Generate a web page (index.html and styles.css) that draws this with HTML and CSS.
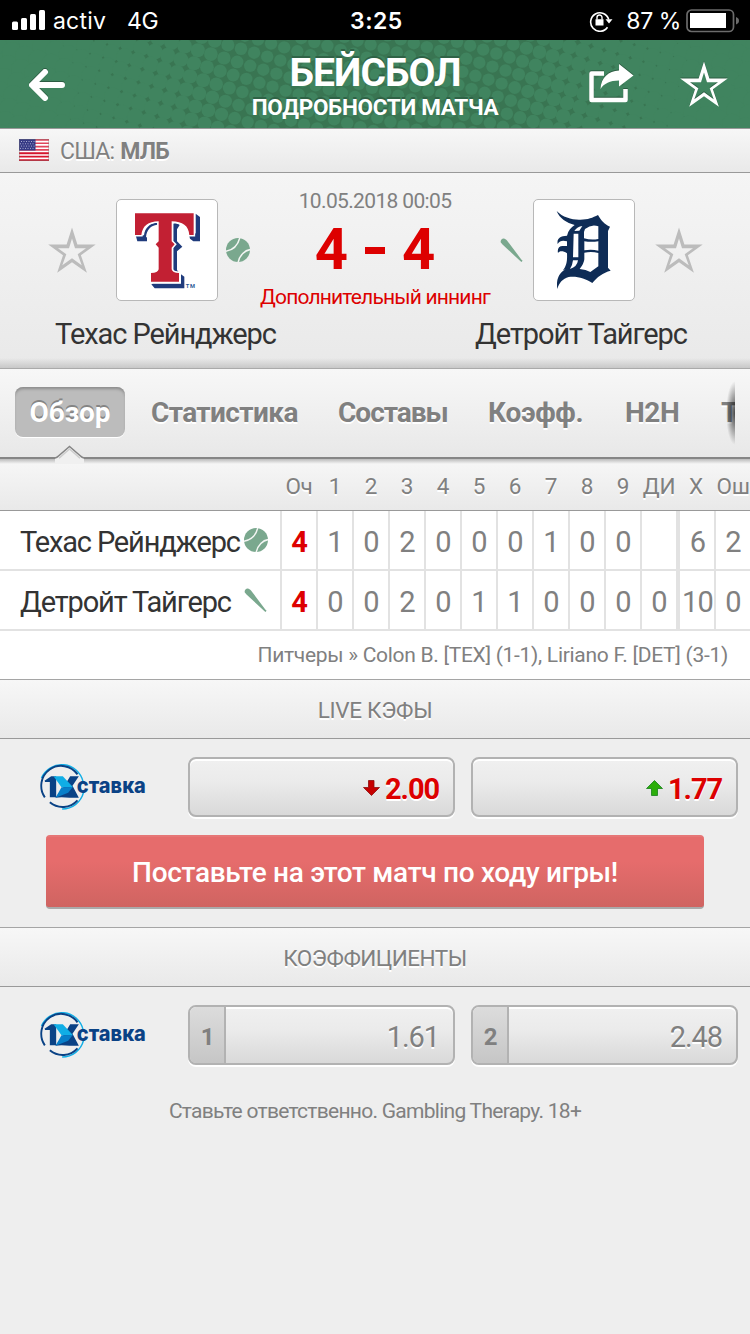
FILE: index.html
```html
<!DOCTYPE html>
<html lang="ru">
<head>
<meta charset="utf-8">
<title>Бейсбол</title>
<link rel="stylesheet" href="styles.css">
</head>
<body>
<svg class="defs" aria-hidden="true">
  <symbol id="star" viewBox="0 0 48 48"><path fill="currentColor" fill-rule="evenodd" d="M24 1.500 29.400 18.400 47.700 18.500 32.900 29.200 38.900 46.700 24 36.300 9.200 46.700 15 29.200 .2 18.500 18.600 18.400ZM24 12.500 21 22.200 10 22.300 18.300 28.300 14.300 39.200 24 32.200 33.700 39.200 29.700 28.300 38 22.300 27 22.200Z"/></symbol>
  <symbol id="ball" viewBox="0 0 24 24"><circle cx="12" cy="12" r="12" fill="#7aa88e"/><path d="M-1 13.500C6 12.500 12 8 14-1M12 25C13.500 17 19 12 25 11.500" fill="none" stroke="#f4f6f4" stroke-width="1.500"/></symbol>
  <symbol id="bat" viewBox="0 0 24 24"><path fill="#7aa88e" d="M.8 4.500C.2 2.500 1.500.4 3.600.4 5 .3 6 1.400 7 2.500L21.300 21.400 22.600 22.700 21.400 24 20 22.800 2.500 6.500Z"/></symbol>
  <symbol id="mark" viewBox="120 66 320 150">
    <path d="M124 114A66 66 0 0 1 249 126M250 157A66 66 0 0 1 186 207" fill="none" stroke="#10aee6" stroke-width="4.500"/>
    <path d="M134 172A59 59 0 0 1 232 103M149 187A60 60 0 0 0 232 181" fill="none" stroke="#0a4285" stroke-width="6"/>
    <path fill="#0a4285" d="M133 122 153 109H168V172H149V126H135ZM210 109H236L217 137 236 173H208L184 172 166 173 191 140Z"/>
    <path fill="#10aee6" d="M160 109H188L218 141 184 142Z"/>
    <path fill="#087fc9" d="M184 142 218 141 204 158 166 173Z"/>
  </symbol>
</svg>

<div class="status">
  <svg class="signal" viewBox="0 0 34 20"><g fill="#fff"><rect y="11.500" width="6" height="8.500" rx="1.500"/><rect x="9" y="8" width="6" height="12" rx="1.500"/><rect x="18" y="4" width="6" height="16" rx="1.500"/><rect x="27" width="6" height="20" rx="1.500"/></g></svg>
  <span class="carrier">activ</span><span class="net">4G</span>
  <span class="clock">3:25</span>
  <svg class="lock" viewBox="0 0 24 22"><path d="M18.500 17.200A9.200 9.200 0 1 1 19.700 9.500" fill="none" stroke="#fff" stroke-width="1.600"/><path fill="#fff" d="M16.500 9.300H23.500L20 13.500ZM6.500 9.300H14.500V15.500H6.500Z"/><path d="M8 9.500V7.500a2.500 2.500 0 0 1 5 0V9.500" fill="none" stroke="#fff" stroke-width="1.400"/></svg>
  <span class="pct">87 %</span>
  <svg class="battery" viewBox="0 0 54 24"><rect x="1" y="1" width="46.500" height="21.500" rx="4.500" fill="none" stroke="#6b6b6b" stroke-width="1.700"/><rect x="4" y="4" width="36" height="15" fill="#fff"/><path d="M50 8v7.500q3-1 3-3.700T50 8Z" fill="#6b6b6b"/></svg>
</div>

<header class="top">
  <svg class="dots" id="dots" width="750" height="88"></svg>
  <svg class="back" viewBox="0 0 38 34"><path d="M17 4 4 17 17 30M6 17H34" fill="none" stroke="#fff" stroke-width="6" stroke-linecap="round" stroke-linejoin="round"/></svg>
  <h1 class="titles"><span class="title">БЕЙСБОЛ</span><span class="subtitle">ПОДРОБНОСТИ МАТЧА</span></h1>
  <svg class="share" viewBox="0 0 46 40"><path d="M16 9.500H3.500V36H37.500V25" fill="none" stroke="#fff" stroke-width="4.500" stroke-linejoin="round"/><path fill="#fff" d="M31 0 45.500 11.500 31 22.500V16.500C22 16.500 16 19.500 12.500 25 13 13.500 20.500 7 31 6.500Z"/></svg>
  <svg class="fav"><use href="#star"/></svg>
</header>

<div class="league">
  <svg class="flag" viewBox="0 0 30 22"><rect width="30" height="22" fill="#fff"/><g fill="#e0455c"><path d="M0 0H30V1.700H0ZM0 3.400H30V5.100H0ZM0 6.800H30V8.500H0ZM0 10.100H30V11.800H0Z"/></g><path fill="#d5152c" d="M0 13.300H30V15.200H0ZM0 16.700H30V18.500H0ZM0 20.200H30V22H0Z"/><rect width="16.500" height="11.500" fill="#363a85"/><path d="M2 2.500H15.500M1 4.800H15.500M2 7.100H15.500M1 9.400H15.500" stroke="#a9abd0" stroke-width="1" stroke-dasharray="1 1.500"/><rect x=".5" y=".5" width="29" height="21" fill="none" stroke="#777" stroke-opacity=".35"/></svg>
  <span class="country">США:</span><b class="lname">МЛБ</b>
</div>

<section class="match">
  <div class="duel">
    <svg class="star"><use href="#star"/></svg>
    <div class="logo home"><svg viewBox="351 60 300 300">
      <path fill="#1f3b7c" d="M587 101 600 111V184H580L570 176 568 168 587 160ZM405 172H438C440 148 452 137 472 134V127C450 130 434 144 432 166H407L412 184H441L441 172ZM520 131C528 130 534 132 539 135L531 148V184L547 200 531 214V270L536 277 520 272ZM543 283 553 290V325H464L454 313 459 311H543Z"/>
      <path fill="none" stroke="#fff" stroke-width="9" d="M405 100H581V165H568C566 137 548 125 515 124V184L524 193 515 203V268Q517 279 537 279V305H453V279Q474 279 476 268V203L467 193 476 184V124C444 125 428 137 424 165H405Z"/>
      <path fill="#c22033" d="M405 100H581V165H568C566 137 548 125 515 124V184L524 193 515 203V268Q517 279 537 279V305H453V279Q474 279 476 268V203L467 193 476 184V124C444 125 428 137 424 165H405Z"/>
      <text x="557" y="325" class="tm" textLength="28">TM</text></svg></div>
    <svg class="serve"><use href="#ball"/></svg>
    <div class="center">
      <span class="date">10.05.2018 00:05</span>
      <span class="score"><span>4</span><i class="dash"></i><span>4</span></span>
      <span class="phase">Дополнительный иннинг</span>
    </div>
    <svg class="serve"><use href="#bat"/></svg>
    <div class="logo away"><svg viewBox="132 60 300 300">
      <path fill="#0e2c56" fill-rule="evenodd" d="M200 93C218 112 247 120 271 119 294 119 308 113 324 105 332 120 343 133 360 140L354 153V263L362 272C339 278 321 291 307 309 288 296 259 287 236 291 218 296 207 309 202 327 198 302 205 279 227 268L219 271C230 256 232 244 231 220 218 211 208 213 204 219 201 205 208 196 222 198H231V184C218 180 209 182 203 192 200 176 210 168 231 167 235 151 243 142 254 135 230 129 208 115 200 93ZM253 153Q262 140 277 138L268 152ZM251 161H265V232H249ZM285 147Q305 131 325 139V177Q303 181 282 175V156ZM283 184Q304 187 325 184V212Q304 207 283 211ZM283 218Q305 213 325 219V259L301 276Q288 268 269 267 282 251 283 238ZM249 241H264Q262 260 240 267 247 258 249 241Z"/></svg></div>
    <svg class="star"><use href="#star"/></svg>
  </div>
  <div class="names"><div class="name-home">Техас Рейнджерс</div><div class="name-away">Детройт Тайгерс</div></div>
</section>

<nav class="tabs">
  <div class="strip">
    <a class="tab active">Обзор</a><a class="tab t2">Статистика</a><a class="tab t3">Составы</a><a class="tab t4">Коэфф.</a><a class="tab t5">H2H</a><a class="tab t6">Таблица</a>
    <i class="more"></i>
  </div>
  <svg class="notch" viewBox="0 0 30 18"><path d="M0 13.500 14.500 .8 29 13.500V18H0Z" fill="#f0f0f0"/><path d="M0 13 Q2 12.500 3.500 11L14.500 1.500 25.500 11Q27 12.500 29 13" fill="none" stroke="#858585" stroke-width="1.600"/><path d="M4 13.300 14.500 4 25 13.300" fill="none" stroke="#ccc" stroke-width="1.500"/></svg>
</nav>

<div class="grid head"><span></span><span>Оч</span><span>1</span><span>2</span><span>3</span><span>4</span><span>5</span><span>6</span><span>7</span><span>8</span><span>9</span><span>ДИ</span><span>X</span><span>Ош</span></div>
<div class="grid row"><span class="team"><span class="team-name">Техас Рейнджерс</span><svg class="mini"><use href="#ball"/></svg></span><b>4</b><span>1</span><span>0</span><span>2</span><span>0</span><span>0</span><span>0</span><span>1</span><span>0</span><span>0</span><span></span><span class="hits">6</span><span>2</span></div>
<div class="grid row"><span class="team"><span class="team-name">Детройт Тайгерс</span><svg class="mini"><use href="#bat"/></svg></span><b>4</b><span>0</span><span>0</span><span>2</span><span>0</span><span>1</span><span>1</span><span>0</span><span>0</span><span>0</span><span>0</span><span class="hits">10</span><span>0</span></div>
<div class="pitchers">Питчеры » Colon B. [TEX] (1-1), Liriano F. [DET] (3-1)</div>

<h2 class="section s1">LIVE КЭФЫ</h2>
<div class="odds">
  <svg class="brand" viewBox="0 0 320 150"><use href="#mark" width="320" height="150"/><text x="110" y="92" class="stavka-text" textLength="207" lengthAdjust="spacingAndGlyphs">ставка</text></svg>
  <div class="odd live"><svg class="arrow" viewBox="0 0 17 16"><path d="M5.500 .5H11V7.500H16.500L8.500 15.500 .5 7.500H5.500Z" fill="#c60000" stroke="#8d0d0d" stroke-width=".8"/></svg><b>2.00</b></div>
  <div class="odd live"><svg class="arrow" viewBox="0 0 17 16"><path d="M5.500 15.500H11.500V8.500H16.500L8.500 .5 .5 8.500H5.500Z" fill="#2cae0b" stroke="#16801a" stroke-width=".8"/></svg><b>1.77</b></div>
</div>
<div class="bet">Поставьте на этот матч по ходу игры!</div>
<h2 class="section s2">КОЭФФИЦИЕНТЫ</h2>
<div class="odds">
  <svg class="brand" viewBox="0 0 320 150"><use href="#mark" width="320" height="150"/><text x="110" y="92" class="stavka-text" textLength="207" lengthAdjust="spacingAndGlyphs">ставка</text></svg>
  <div class="odd"><b class="side">1</b><span class="val">1.61</span></div>
  <div class="odd"><b class="side">2</b><span class="val">2.48</span></div>
</div>
<footer class="foot">Ставьте ответственно. Gambling Therapy. 18+</footer>
<script src="dots.js"></script>
</body>
</html>
```
FILE: styles.css
```css
* { box-sizing: border-box; }
body { margin: 0; width: 750px; height: 1334px; overflow: hidden; background: #eee; color: #808080; font-family: Roboto, "Noto Sans", sans-serif; }
svg { display: block; flex: none; }
.defs { position: absolute; width: 0; height: 0; }
h1, h2 { margin: 0; font-weight: 400; }
span, b { white-space: nowrap; }

.status { height: 40px; background: #000; color: #fff; display: flex; align-items: center; font: 23px/40px Inter, sans-serif; padding: 1px 11px 0 12px; position: relative; }
.signal { width: 34px; height: 20px; margin-top: -1px; }
.carrier { margin-left: 7px; letter-spacing: .2px; }
.net { margin-left: 21px; letter-spacing: -.5px; }
.clock { position: absolute; left: 350px; font-weight: 600; letter-spacing: .5px; }
.lock { width: 24px; height: 22px; margin-left: auto; }
.pct { margin-left: 13px; letter-spacing: -.4px; }
.battery { width: 54px; height: 24px; margin-left: 5px; margin-right: -1px; }

.top { height: 88px; background: #40845f; display: flex; align-items: center; position: relative; color: #fff; padding: 0 22px 0 28px; }
.top > * { position: relative; }
.top .dots { position: absolute; left: 0; top: 0; }
.back { width: 38px; height: 34px; margin-top: 2px; filter: drop-shadow(0 -1px 0 #2c5c42); }
.titles { width: 290px; margin-left: 164px; padding-top: 4px; display: flex; flex-direction: column; align-items: center; text-shadow: 0 -2px 0 #2f6346; font-weight: 700; }
.title { font-size: 39px; line-height: 42px; height: 42px; letter-spacing: -.9px; }
.subtitle { font-size: 22.500px; line-height: 27px; height: 27px; letter-spacing: -.3px; }
.share { width: 46px; height: 40px; margin-left: 68px; filter: drop-shadow(0 -1px 0 #2c5c42); }
.fav { width: 48px; height: 48px; margin-left: auto; margin-top: -1px; filter: drop-shadow(0 -1px 0 #2c5c42); }

.league { height: 45px; border-top: 1px solid #999; border-bottom: 1px solid #999; background: linear-gradient(#f7f7f7, #e9e9e9); display: flex; align-items: center; padding-left: 19px; font-size: 23px; line-height: 27px; letter-spacing: -.8px; text-shadow: 0 2px 0 #fff; }
.flag { width: 30px; height: 22px; margin-top: -1px; }
.country { margin-left: 11px; padding-top: 2px; }
.lname { margin-left: 6px; padding-top: 2px; }

.match { height: 196px; padding-top: 16px; border-bottom: 1px solid #aaa; background: linear-gradient(transparent 185px, #c8c8c8), linear-gradient(#f5f5f5, #e9e9e9); }
.duel { height: 122px; display: flex; align-items: center; padding-left: 48px; }
.star { width: 48px; height: 48px; color: #bcbcbc; }
.logo { width: 102px; height: 102px; border: 1px solid #b8b8b8; border-radius: 5px; background: #fff; flex: none; }
.logo svg { width: 100px; height: 100px; }
.home { margin: 0 8px 0 20px; }
.away { margin: 0 20px 0 9px; }
.serve { width: 24px; height: 24px; }
.tm { font: 700 17px Roboto, sans-serif; fill: #2d5a97; }
.stavka-text { font: 800 64px Inter, sans-serif; fill: #0a4285; }
.center { width: 250px; height: 122px; display: flex; flex-direction: column; align-items: center; }
.date { font-size: 21px; line-height: 24px; height: 22px; letter-spacing: -.65px; }
.score { height: 76px; display: flex; align-items: center; color: #d00; font-weight: 700; font-size: 58px; line-height: 76px; }
.score .dash { width: 20px; height: 7px; margin: 3px 17px 0; background: #d00; }
.phase { color: #d00; font-size: 21px; line-height: 20px; letter-spacing: -.82px; }
.names { display: flex; justify-content: space-between; color: #333; font-size: 29px; line-height: 47px; letter-spacing: -1.080px; text-align: center; }
.name-home { width: 331px; }
.name-away { width: 338px; }

.tabs { height: 90px; border-bottom: 2px solid #868686; background: linear-gradient(#f7f7f7, #e8e8e8); position: relative; }
.strip { display: flex; width: 735px; height: 88px; padding-left: 15px; align-items: center; overflow: hidden; position: relative; }
.tab { font-size: 28px; font-weight: 700; line-height: 52px; flex: none; text-shadow: 0 2px 0 #fff; }
.tab.active { width: 110px; height: 50px; margin-top: -2px; border-radius: 8px; background: #bcbcbc; color: #fff; text-align: center; text-shadow: 0 -2px 0 #858585; box-shadow: inset 0 3px 3px -1px #8c8c8c, 0 1px 0 #fff; }
.t2 { margin-left: 26px; width: 187px; letter-spacing: -.6px; }
.t3 { width: 150px; letter-spacing: -1px; }
.t4 { width: 137px; letter-spacing: -.3px; }
.t5 { width: 96px; letter-spacing: -.4px; }
.more { position: absolute; right: 0; top: 12px; width: 10px; height: 64px; background: radial-gradient(ellipse 9px 32px at 100% 50%, rgba(0,0,0,.7), rgba(0,0,0,0)); }
.notch { position: absolute; left: 55px; top: 76px; width: 30px; height: 18px; }

.grid { display: grid; grid-template-columns: 280px repeat(11, 36px) 38px 36px; text-align: center; }
.head { height: 52px; border-bottom: 1px solid #999; background: linear-gradient(#bbb, rgba(240,240,240,0) 5px), linear-gradient(#f7f7f7, #e9e9e9); font-size: 22.500px; line-height: 54px; text-shadow: 0 2px 0 #fff; letter-spacing: -.3px; }
.head > span { padding-left: 2px; }
.row { height: 60px; border-bottom: 2px solid #e2e2e2; background: #fff; font-size: 29px; line-height: 63px; }
.row > * { border-left: 2px solid #e2e2e2; padding-left: 1px; height: 58px; }
.row > .team { border: 0; color: #333; display: flex; align-items: center; padding-left: 20px; letter-spacing: -1.150px; }
.team-name { padding-top: 4px; }
.row > .hits { border-left-width: 4px; letter-spacing: -.8px; }
.row b { color: #d00; }
.mini { width: 24px; height: 24px; margin-left: auto; margin-right: 12px; }
.pitchers { height: 49px; border-bottom: 1px solid #a5a5a5; background: #fff; text-align: right; padding-right: 22px; font-size: 21px; line-height: 48px; letter-spacing: -.29px; }

.section { height: 59px; border-bottom: 1px solid #999; background: linear-gradient(#f7f7f7, #e9e9e9); text-align: center; font-size: 22.500px; line-height: 60px; text-shadow: 0 2px 0 #fff; letter-spacing: -.3px; }
.s2 { height: 60px; border-top: 1px solid #a5a5a5; letter-spacing: -.5px; }
.odds { display: flex; padding: 18px 12px 0 40px; align-items: center; }
.brand { width: 107px; height: 50px; margin-right: 41px; }
.odd { width: 267px; height: 60px; border: 2px solid #b2b2b2; border-radius: 8px; background: linear-gradient(#f0f0f0, #ebebeb 40%, #d9d9d9); box-shadow: inset 0 2px 0 #fff, 0 2px 0 #fff; display: flex; align-items: center; justify-content: flex-end; padding-right: 14px; font-size: 29px; letter-spacing: -1.100px; text-shadow: 0 2px 0 #fff; line-height: 56px; }
.odd + .odd { margin-left: 16px; }
.live { color: #d00; padding-top: 4px; }
.arrow { width: 17px; height: 16px; margin-right: 5px; margin-top: -3px; }
.side { width: 36px; height: 56px; margin-right: auto; border-right: 2px solid #b2b2b2; border-radius: 6px 0 0 6px; background: linear-gradient(#dcdcdc, #c6c6c6); font-size: 24px; line-height: 60px; text-align: center; text-shadow: none; }
.val { padding-top: 4px; }
.bet { width: 658px; height: 74px; margin: 18px auto; border-radius: 4px; background: linear-gradient(#e66c6c, #e66c6c 35%, #cf6461); border-top: 2px solid #e67676; border-bottom: 2px solid #aaa; color: #fff; font-weight: 500; font-size: 28px; line-height: 71px; letter-spacing: -.3px; text-align: center; }
.foot { text-align: center; font-size: 21px; line-height: 30px; margin-top: 31px; letter-spacing: -.72px; }
```
FILE: dots.js
```js
// Halftone of the header: light dots over a darker green, merging toward both edges.
const svg = document.getElementById('dots');
let out = '<rect width="750" height="88" fill="#397552"/>';
for (let i = -10; i < 65; i++) {
  for (let j = -25; j < 25; j++) {
    const x = 99.7 + i * 13.1 - j * 3.9;
    const y = 52.3 + i * 3.9 + j * 13.1;
    if (x < -12 || x > 762 || y < -12 || y > 100) continue;
    const d = Math.abs(x - 375);
    const r = d < 130 ? 6.2 : Math.min(10, 6.2 + (d - 130) * 0.0185);
    out += `<circle cx="${x.toFixed(1)}" cy="${y.toFixed(1)}" r="${r.toFixed(2)}" fill="#40845f"/>`;
  }
}
svg.innerHTML = out;
```
